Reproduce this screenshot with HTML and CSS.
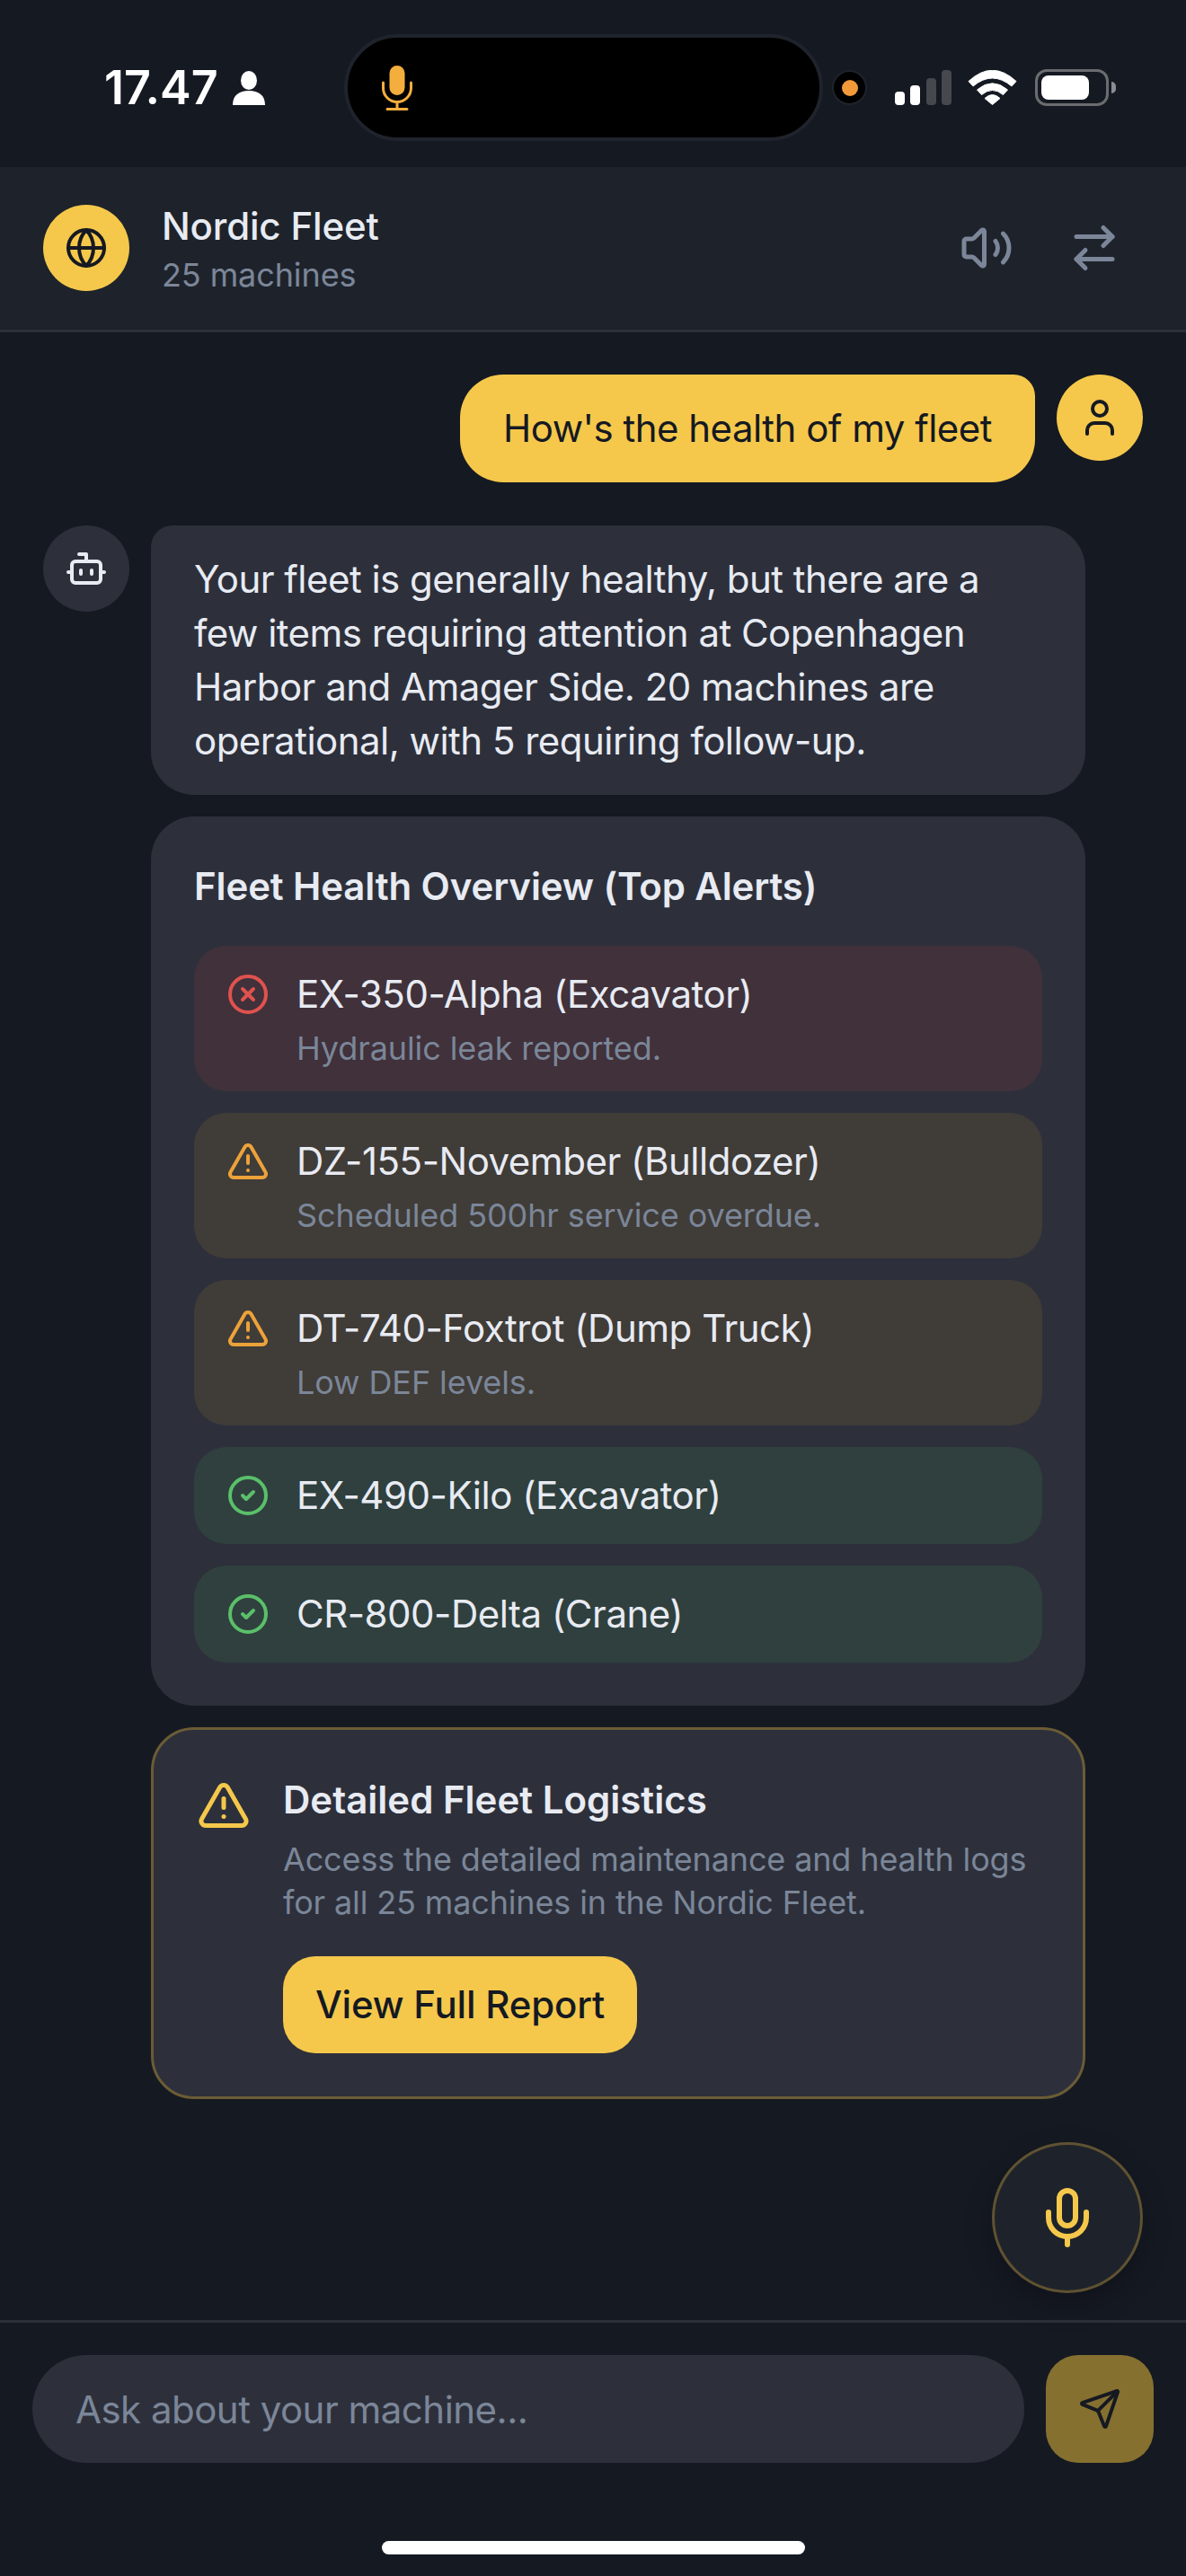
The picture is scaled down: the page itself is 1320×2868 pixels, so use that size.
FILE: index.html
```html
<!DOCTYPE html>
<html lang="en">
<head>
<meta charset="utf-8">
<title>Nordic Fleet</title>
<link rel="stylesheet" href="styles.css">
</head>
<body>
<div class="screen">
  <div class="statusbar">
    <div class="status-left">
      <span class="time">17.47</span>
      <svg class="person" viewBox="0 0 36 38"><ellipse cx="18" cy="10.5" rx="9" ry="10.5"/><path d="M0 38c0-11 7-16 18-16s18 5 18 16z"/></svg>
    </div>
    <div class="island">
      <svg class="island-mic" viewBox="0 0 34 50"><rect x="8.5" y="0" width="17" height="33" rx="8.5" class="mic-fill"/><path d="M1.5 19v6a15.500 15.500 0 0 0 31 0v-6M17 41v7M6 48.500h22" class="mic-line"/></svg>
    </div>
    <div class="camera"><span class="camera-dot"></span></div>
    <div class="signal">
      <span class="bar bar-1"></span><span class="bar bar-2"></span><span class="bar bar-3"></span><span class="bar bar-4"></span>
    </div>
    <svg class="wifi" viewBox="0 0 55 39"><path d="M1 12.500Q27.500-12 54 12.500L49 18Q27.500 0 6 18zM10.500 22Q27.500 7.500 44.500 22L39.500 27.500Q27.500 17.500 15.500 27.500zM19 31.500Q27.500 23.500 36 31.500L27.500 38.500z"/></svg>
    <div class="battery"><span class="battery-level"></span></div>
    <span class="battery-nub"></span>
  </div>

  <header class="header">
    <div class="avatar avatar-yellow">
      <svg class="ic ic-48 dark" viewBox="0 0 24 24"><circle cx="12" cy="12" r="10"/><path d="M12 2a14.500 14.500 0 0 0 0 20 14.500 14.500 0 0 0 0-20"/><path d="M2 12h20"/></svg>
    </div>
    <div class="header-text">
      <div class="header-title">Nordic Fleet</div>
      <div class="header-sub">25 machines</div>
    </div>
    <div class="header-actions">
      <span class="icon-btn"><svg class="ic ic-60 muted" viewBox="0 0 24 24"><path d="M11 4.702a.705.705 0 0 0-1.203-.498L6.413 7.587A1.400 1.400 0 0 1 5.416 8H3a1 1 0 0 0-1 1v6a1 1 0 0 0 1 1h2.416a1.400 1.400 0 0 1 .997.413l3.383 3.384A.705.705 0 0 0 11 19.298z"/><path d="M16 9a5 5 0 0 1 0 6"/><path d="M19.364 18.364a9 9 0 0 0 0-12.728"/></svg></span>
      <span class="icon-btn"><svg class="ic ic-60 muted" viewBox="0 0 24 24"><path d="m16 3 4 4-4 4"/><path d="M20 7H4"/><path d="m8 21-4-4 4-4"/><path d="M4 17h16"/></svg></span>
    </div>
  </header>

  <main class="chat">
    <div class="row row-user">
      <div class="bubble bubble-user">How's the health of my fleet</div>
      <div class="avatar avatar-yellow">
        <svg class="ic ic-48 dark" viewBox="0 0 24 24"><path d="M19 21v-2a4 4 0 0 0-4-4H9a4 4 0 0 0-4 4v2"/><circle cx="12" cy="7" r="4"/></svg>
      </div>
    </div>

    <div class="row row-bot">
      <div class="avatar avatar-dark">
        <svg class="ic ic-48 light" viewBox="0 0 24 24"><path d="M12 8V4H8"/><rect x="4" y="8" width="16" height="12" rx="2"/><path d="M2 14h2"/><path d="M20 14h2"/><path d="M15 13v2"/><path d="M9 13v2"/></svg>
      </div>
      <div class="bot-column">
        <div class="bubble bubble-bot">Your fleet is generally healthy, but there are a few items requiring attention at Copenhagen Harbor and Amager Side. 20 machines are operational, with 5 requiring follow-up.</div>

        <section class="card">
          <h2 class="card-title">Fleet Health Overview (Top Alerts)</h2>
          <div class="alerts">
            <div class="alert alert-red">
              <svg class="ic ic-48 red alert-icon" viewBox="0 0 24 24"><circle cx="12" cy="12" r="10"/><path d="m15 9-6 6"/><path d="m9 9 6 6"/></svg>
              <div>
                <div class="alert-title">EX-350-Alpha (Excavator)</div>
                <div class="alert-sub">Hydraulic leak reported.</div>
              </div>
            </div>
            <div class="alert alert-orange">
              <svg class="ic ic-48 orange alert-icon" viewBox="0 0 24 24"><path d="m21.730 18-8-14a2 2 0 0 0-3.480 0l-8 14A2 2 0 0 0 4 21h16a2 2 0 0 0 1.730-3"/><path d="M12 9v4"/><path d="M12 17h.01"/></svg>
              <div>
                <div class="alert-title">DZ-155-November (Bulldozer)</div>
                <div class="alert-sub">Scheduled 500hr service overdue.</div>
              </div>
            </div>
            <div class="alert alert-orange">
              <svg class="ic ic-48 orange alert-icon" viewBox="0 0 24 24"><path d="m21.730 18-8-14a2 2 0 0 0-3.480 0l-8 14A2 2 0 0 0 4 21h16a2 2 0 0 0 1.730-3"/><path d="M12 9v4"/><path d="M12 17h.01"/></svg>
              <div>
                <div class="alert-title">DT-740-Foxtrot (Dump Truck)</div>
                <div class="alert-sub">Low DEF levels.</div>
              </div>
            </div>
            <div class="alert alert-green">
              <svg class="ic ic-48 green alert-icon" viewBox="0 0 24 24"><circle cx="12" cy="12" r="10"/><path d="m9 12 2 2 4-4"/></svg>
              <div><div class="alert-title">EX-490-Kilo (Excavator)</div></div>
            </div>
            <div class="alert alert-green">
              <svg class="ic ic-48 green alert-icon" viewBox="0 0 24 24"><circle cx="12" cy="12" r="10"/><path d="m9 12 2 2 4-4"/></svg>
              <div><div class="alert-title">CR-800-Delta (Crane)</div></div>
            </div>
          </div>
        </section>

        <section class="notice">
          <svg class="ic ic-60 yellow notice-icon" viewBox="0 0 24 24"><path d="m21.730 18-8-14a2 2 0 0 0-3.480 0l-8 14A2 2 0 0 0 4 21h16a2 2 0 0 0 1.730-3"/><path d="M12 9v4"/><path d="M12 17h.01"/></svg>
          <div class="notice-body">
            <h3 class="notice-title">Detailed Fleet Logistics</h3>
            <p class="notice-text">Access the detailed maintenance and health logs for all 25 machines in the Nordic Fleet.</p>
            <button class="report-btn" type="button">View Full Report</button>
          </div>
        </section>
      </div>
    </div>

    <button class="mic-fab" type="button" aria-label="Voice input">
      <svg class="ic ic-72 yellow" viewBox="0 0 24 24"><path d="M12 2a3 3 0 0 0-3 3v7a3 3 0 0 0 6 0V5a3 3 0 0 0-3-3Z"/><path d="M19 10v2a7 7 0 0 1-14 0v-2"/><path d="M12 19v3"/></svg>
    </button>
  </main>

  <footer class="composer">
    <input class="composer-input" type="text" placeholder="Ask about your machine...">
    <button class="send-btn" type="button" aria-label="Send">
      <svg class="ic ic-48 dark" viewBox="0 0 24 24"><path d="M14.536 21.686a.5.5 0 0 0 .937-.024l6.500-19a.496.496 0 0 0-.635-.635l-19 6.500a.5.5 0 0 0-.024.937l7.930 3.180a2 2 0 0 1 1.112 1.110z"/><path d="m21.854 2.147-10.940 10.939"/></svg>
    </button>
  </footer>
  <div class="home-indicator"></div>
</div>
</body>
</html>
```

FILE: styles.css
```css
* { box-sizing: border-box; }
html, body { margin: 0; padding: 0; background: #151922; }
body { font-family: "Inter", "Liberation Sans", sans-serif; color: #e8ebf2; }
h2, h3, p { margin: 0; }
button { font-family: inherit; border: 0; cursor: pointer; }

.screen { position: relative; width: 1320px; height: 2868px; display: flex; flex-direction: column; overflow: hidden; background: #151922; }

/* Icons */
.ic { display: block; fill: none; stroke: currentColor; stroke-width: 2; stroke-linecap: round; stroke-linejoin: round; flex: none; }
.ic-48 { width: 48px; height: 48px; }
.ic-60 { width: 60px; height: 60px; }
.ic-72 { width: 72px; height: 72px; }
.dark { color: #151922; }
.light { color: #e8ebf2; }
.muted { color: #7c8699; }
.red { color: #e0524e; }
.orange { color: #eda23a; }
.green { color: #5bbf6a; }
.yellow { color: #f5c84b; }

/* Status bar */
.statusbar { height: 186px; flex: none; padding: 38px 0 29px 119px; display: flex; align-items: center; }
.status-left { width: 264px; display: flex; align-items: center; gap: 16px; }
.time { font-size: 52px; line-height: 60px; font-weight: 600; color: #fff; letter-spacing: 0; margin-left: -3px; }
.person { width: 36px; height: 38px; fill: #fff; }
.island { width: 533px; height: 119px; background: #000; border: 4.5px solid #1f232b; border-radius: 60px; display: flex; align-items: center; padding-left: 38px; }
.island-mic { width: 34px; height: 50px; }
.mic-fill { fill: #f4ae3d; }
.mic-line { fill: none; stroke: #f4ae3d; stroke-width: 3; stroke-linecap: round; }
.camera { width: 39px; height: 39px; margin-left: 10px; background: #000; border: 2px solid #1f232b; border-radius: 50%; display: flex; align-items: center; justify-content: center; }
.camera-dot { width: 18px; height: 18px; border-radius: 50%; background: #f29a38; }
.signal { margin-left: 31px; width: 63px; height: 39px; display: flex; align-items: flex-end; justify-content: space-between; }
.bar { width: 11px; border-radius: 4px; background: #fff; }
.bar-1 { height: 15px; }
.bar-2 { height: 22px; }
.bar-3 { height: 30px; background: #45484d; }
.bar-4 { height: 39px; background: #45484d; }
.wifi { width: 55px; height: 39px; margin-left: 18px; fill: #fff; stroke: #fff; stroke-width: 1; stroke-linejoin: round; }
.battery { width: 82px; height: 41px; margin-left: 20px; border: 3.5px solid #6a6c70; border-radius: 13px; padding: 3.5px; }
.battery-level { display: block; width: 53px; height: 27px; background: #fff; border-radius: 8px; }
.battery-nub { width: 5px; height: 13px; margin-left: 3px; background: #8a8c90; border-radius: 0 6px 6px 0; }

/* Header */
.header { flex: none; height: 184px; padding: 42px 48px 43px; display: flex; align-items: center; gap: 36px; background: #1e232b; border-bottom: 3px solid #2d303b; }
.avatar { width: 96px; height: 96px; flex: none; border-radius: 50%; display: flex; align-items: center; justify-content: center; }
.avatar-yellow { background: #f5c84b; }
.avatar-dark { background: #2d303b; }
.header-text { flex: 1; }
.header-title { font-size: 42px; line-height: 60px; font-weight: 500; letter-spacing: -0.15px; color: #e8ebf2; }
.header-sub { font-size: 36px; line-height: 48px; letter-spacing: -0.1px; color: #7c8699; }
.header-actions { display: flex; gap: 12px; }
.icon-btn { padding: 24px; display: block; }

/* Chat */
.chat { position: relative; flex: 1; padding: 47px 48px 0; display: flex; flex-direction: column; gap: 48px; }
.row { display: flex; gap: 24px; align-items: flex-start; }
.row-user { justify-content: flex-end; }
.bubble { font-size: 42px; line-height: 60px; padding: 30px 48px; letter-spacing: -0.52px; }
.bubble-user { background: #f5c84b; color: #151922; border-radius: 48px 24px 48px 48px; }
.bubble-bot { background: #2d303b; color: #e8ebf2; border-radius: 24px 48px 48px 48px; }
.bot-column { width: 1040px; display: flex; flex-direction: column; gap: 24px; }

.card { background: #2d303b; border-radius: 48px; padding: 48px; }
.card-title { font-size: 42px; line-height: 60px; font-weight: 600; letter-spacing: -0.13px; color: #e8ebf2; margin-bottom: 36px; }
.alerts { display: flex; flex-direction: column; gap: 24px; }
.alert { display: flex; align-items: flex-start; gap: 30px; padding: 24px 36px; border-radius: 36px; }
.alert-red { background: #40313b; }
.alert-orange { background: #403c38; }
.alert-green { background: #2f403e; }
.alert-icon { margin-top: 6px; }
.alert-title { font-size: 42px; line-height: 60px; letter-spacing: -0.48px; color: #e8ebf2; }
.alert-sub { font-size: 36px; line-height: 48px; letter-spacing: -0.1px; margin-top: 6px; color: #7b8698; }

.notice { display: flex; align-items: flex-start; gap: 36px; padding: 48px; background: #2d303b; border: 3px solid #6b5c36; border-radius: 48px; }
.notice-icon { margin-top: 6px; }
.notice-body { flex: 1; }
.notice-title { font-size: 42px; line-height: 60px; font-weight: 600; color: #e8ebf2; }
.notice-text { font-size: 36px; line-height: 48px; letter-spacing: -0.14px; margin-top: 12px; color: #7b8698; }
.report-btn { display: block; margin-top: 36px; padding: 24px 36px; font-size: 42px; line-height: 60px; font-weight: 500; letter-spacing: -0.2px; color: #151922; background: #f5c84b; border-radius: 36px; }

.mic-fab { position: absolute; right: 48px; bottom: 30px; width: 168px; height: 168px; padding: 0; display: flex; align-items: center; justify-content: center; background: #1e232b; border: 3px solid #5f5232; border-radius: 50%; box-shadow: 0 12px 30px rgba(0, 0, 0, .25); }

/* Composer */
.composer { flex: none; padding: 36px 36px 126px; display: flex; gap: 24px; align-items: center; border-top: 3px solid #2d303b; }
.composer-input { flex: 1; min-width: 0; height: 120px; padding: 0 48px; border: 0; outline: 0; border-radius: 60px; background: #2d303b; color: #e8ebf2; font-family: inherit; font-size: 42px; letter-spacing: -0.52px; }
.composer-input::placeholder { color: #7b8698; opacity: 1; }
.send-btn { width: 120px; height: 120px; flex: none; padding: 0; display: flex; align-items: center; justify-content: center; background: #857030; border-radius: 36px; }

.home-indicator { position: absolute; left: 425px; bottom: 24px; width: 471px; height: 15px; border-radius: 8px; background: #fff; }
```
